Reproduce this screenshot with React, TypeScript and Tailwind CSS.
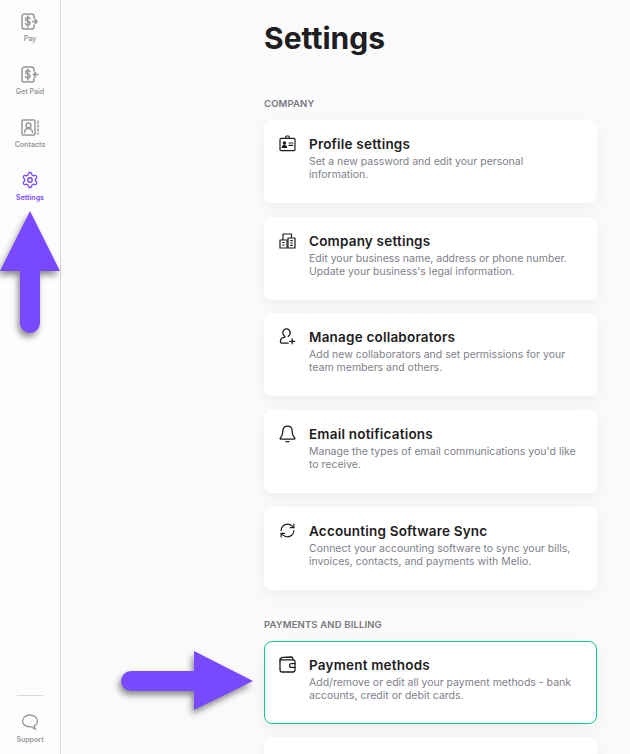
import { RefreshCw, Settings } from "lucide-react";
import type { ReactNode } from "react";

const PayIcon = ({ incoming }: { incoming?: boolean }) => (
  <svg width="18" height="17" viewBox="0 0 18 17" fill="none" stroke="#98989c" strokeWidth="1.5" strokeLinecap="round" strokeLinejoin="round">
    <path d="M13 5V3.6A2.6 2.6 0 0 0 10.4 1H3.6A2.6 2.6 0 0 0 1 3.6v9.8A2.6 2.6 0 0 0 3.6 16h6.8a2.6 2.6 0 0 0 2.6-2.6V12" />
    <path d="M9 5.8c-.3-.9-1-1.4-2.2-1.4-1.3 0-2.2.7-2.2 1.8s.9 1.6 2.2 1.9 2.3.9 2.3 2-1 1.8-2.3 1.8-2.1-.5-2.4-1.4M6.8 3v11" />
    {incoming ? <path d="M17 8.5h-4.6M14.6 6.4l-2.2 2.1 2.2 2.1" /> : <path d="M11.4 8.5H16M14 6.4l2.2 2.1-2.2 2.1" />}
  </svg>
);

const ContactsIcon = () => (
  <svg width="18" height="17" viewBox="0 0 18 17" fill="none" stroke="#98989c" strokeWidth="1.5" strokeLinecap="round" strokeLinejoin="round">
    <rect x="1" y="1" width="13" height="15" rx="1" />
    <circle cx="7.5" cy="6.4" r="2.4" />
    <path d="M3.6 13.6c0-2.6 1.6-4 3.9-4s3.9 1.4 3.9 4M17 2v2M17 6v2M17 10v2M17 14v1" />
  </svg>
);

const ProfileIcon = () => (
  <svg width="17" height="17" viewBox="0 0 17 17" fill="none" stroke="#1d1d22" strokeWidth="1.2" strokeLinecap="round" strokeLinejoin="round">
    <rect x="1" y="3.4" width="15" height="12.2" rx="1" />
    <path d="M6.8 3.4V1.8A.9.9 0 0 1 7.7 1h1.6a.9.9 0 0 1 .9.8v1.6" />
    <circle cx="5.4" cy="8" r="1.1" fill="#1d1d22" />
    <path d="M3.2 12.4c.2-1.4 1-2 2.2-2s2 .6 2.2 2zM10 8h3.8M10 10.4h3.8" fill="#1d1d22" />
  </svg>
);

const CompanyIcon = () => (
  <svg width="17" height="17" viewBox="0 0 17 17" fill="none" stroke="#1d1d22" strokeWidth="1.2" strokeLinejoin="round">
    <rect x="1" y="8" width="7" height="8" />
    <rect x="9" y="6" width="7" height="10" />
    <path d="M4 8V2h8.5v4M3.2 10.5h2.4M3.2 13h2.4M11.3 8.6h2.4M11.3 11h2.4M11.3 13.4h2.4" />
  </svg>
);

const CollaboratorIcon = () => (
  <svg width="17" height="17" viewBox="0 0 17 17" fill="none" stroke="#1d1d22" strokeWidth="1.3" strokeLinecap="round" strokeLinejoin="round">
    <path d="M11.2 4.6a3.7 3.7 0 1 0-7.4 0c0 1.7.8 3 2 3.8v.8c-2.6.5-4.4 2-4.4 4.6 0 .8.5 1.4 1.3 1.4h6.5" />
    <path d="M9.2 8.4c1.2-.8 2-2.1 2-3.8M13.2 10.8v5M10.7 13.3h5" />
  </svg>
);

const BellIcon = () => (
  <svg width="17" height="18" viewBox="0 0 17 18" fill="none" stroke="#1d1d22" strokeWidth="1.3" strokeLinecap="round" strokeLinejoin="round">
    <path d="M8.5 1.2c-3 0-4.7 2.3-4.7 5.2 0 4.2-1.5 5.6-2.6 6.8-.3.4-.1 1 .5 1h13.6c.6 0 .8-.6.5-1-1.1-1.2-2.6-2.6-2.6-6.8 0-2.9-1.7-5.2-4.7-5.2z" />
    <path d="M7 16.6h3" />
  </svg>
);

const WalletIcon = () => (
  <svg width="17" height="17" viewBox="0 0 17 17" fill="none" stroke="#1d1d22" strokeWidth="1.3" strokeLinecap="round" strokeLinejoin="round">
    <path d="M1 5.2v8.6A2.2 2.2 0 0 0 3.2 16h10.6a2.2 2.2 0 0 0 2.2-2.2V5.4a1.5 1.5 0 0 0-1.5-1.5H2.4A1.4 1.4 0 0 1 1 2.6" />
    <path d="M1 5.2C1 3 2.2 1.4 4 1.3l8.3-.3a1.5 1.5 0 0 1 1.5 1.5v1.4" />
    <path d="M16 7.6h-3.6a1.9 1.9 0 0 0 0 3.8H16" />
  </svg>
);

const SupportIcon = () => (
  <svg width="18" height="18" viewBox="0 0 18 18" fill="none" stroke="#98989c" strokeWidth="1.3" strokeLinejoin="round">
    <path d="M9 2c4.2 0 7.4 2.4 7.4 6 0 2.4-1.4 4.2-3.4 5.2l1.6 3.2-4.4-2.6C5 14 1.6 11.8 1.6 8 1.6 4.4 4.8 2 9 2z" />
  </svg>
);

const NavItem = ({ icon, label, active }: { icon: ReactNode; label: string; active?: boolean }) => (
  <div className="flex h-[53px] flex-col items-center">
    <div className="flex h-[20px] items-center justify-center">{icon}</div>
    <span className={`mt-[2px] text-[7px] leading-[12px] font-semibold ${active ? "text-[#7849ff]" : "text-[#98989c]"}`}>{label}</span>
  </div>
);

const Card = ({ icon, title, text, selected }: { icon: ReactNode; title: string; text: ReactNode; selected?: boolean }) => (
  <div
    className={`flex h-[83px] shrink-0 gap-[13px] rounded-lg bg-white shadow-[0_5px_15px_rgba(0,0,0,0.05)] ${
      selected ? "border border-[#14c98c] pt-[14px] pl-[14px]" : "pt-[15px] pl-[15px]"
    }`}
  >
    <div className="w-[17px] shrink-0">{icon}</div>
    <div>
      <div className="text-[13.5px] leading-[18px] font-semibold tracking-[0.2px] text-[#1d1d22]">{title}</div>
      <div className="mt-[2px] text-[10.5px] leading-[13px] text-[#80808a]">{text}</div>
    </div>
  </div>
);

export default function App() {
  return (
    <div className="relative flex h-[754px] w-[630px] overflow-hidden bg-[#fafafa] font-['Inter','Liberation_Sans',sans-serif]">
      {/* Sidebar */}
      <aside className="flex w-[61px] shrink-0 flex-col items-center border-r border-[#dcdcdf] bg-[#fdfdfd] pt-[11px]">
        <NavItem icon={<PayIcon />} label="Pay" />
        <NavItem icon={<PayIcon incoming />} label="Get Paid" />
        <NavItem icon={<ContactsIcon />} label="Contacts" />
        <NavItem icon={<Settings size={18} strokeWidth={1.8} color="#7849ff" />} label="Settings" active />
        <div className="mt-auto mb-[17px] h-px w-[26px] bg-[#d8d8db]" />
        <div className="mb-[8px] flex flex-col items-center">
          <SupportIcon />
          <span className="mt-[3px] text-[7px] leading-[12px] font-semibold text-[#98989c]">Support</span>
        </div>
      </aside>

      {/* Main column */}
      <main className="ml-[203px] flex w-[333px] flex-col">
        <h1 className="mt-[18px] text-[30px] leading-[40px] font-bold text-[#1d1d22]">Settings</h1>
        <h2 className="mt-[39px] text-[9.5px] leading-[13px] font-semibold tracking-[0.15px] text-[#77777f]">COMPANY</h2>
        <div className="mt-[9.9px] flex flex-col gap-[13.75px]">
          <Card icon={<ProfileIcon />} title="Profile settings" text={<>Set a new password and edit your personal<br />information.</>} />
          <Card icon={<CompanyIcon />} title="Company settings" text={<>Edit your business name, address or phone number.<br />Update your business's legal information.</>} />
          <Card icon={<CollaboratorIcon />} title="Manage collaborators" text={<>Add new collaborators and set permissions for your<br />team members and others.</>} />
          <Card icon={<BellIcon />} title="Email notifications" text={<>Manage the types of email communications you'd like<br />to receive.</>} />
          <Card icon={<RefreshCw size={17} strokeWidth={1.6} color="#1d1d22" />} title="Accounting Software Sync" text={<>Connect your accounting software to sync your bills,<br />invoices, contacts, and payments with Melio.</>} />
        </div>
        <h2 className="mt-[28.1px] text-[9.5px] leading-[13px] font-semibold tracking-[0.15px] text-[#77777f]">PAYMENTS AND BILLING</h2>
        <div className="mt-[10px] flex flex-col gap-[13px]">
          <Card selected icon={<WalletIcon />} title="Payment methods" text={<>Add/remove or edit all your payment methods - bank<br />accounts, credit or debit cards.</>} />
          <div className="h-[83px] shrink-0 rounded-lg bg-white shadow-[0_5px_15px_rgba(0,0,0,0.05)]" />
        </div>
      </main>

      {/* Annotation arrows drawn over the screenshot */}
      <svg className="absolute top-[205px] left-0 drop-shadow-[-2px_4px_3px_rgba(0,0,0,0.45)]" width="62" height="136" viewBox="0 0 62 136">
        <path d="M30 6 60 66H40v52a10 10 0 0 1-20 0V66H0z" fill="#7849ff" />
      </svg>
      <svg className="absolute top-[646px] left-[118px] drop-shadow-[-2px_4px_3px_rgba(0,0,0,0.45)]" width="140" height="70" viewBox="0 0 140 70">
        <path d="M135 35 76 64V45H13a10 10 0 0 1 0-20h63V5z" fill="#7849ff" />
      </svg>
    </div>
  );
}
